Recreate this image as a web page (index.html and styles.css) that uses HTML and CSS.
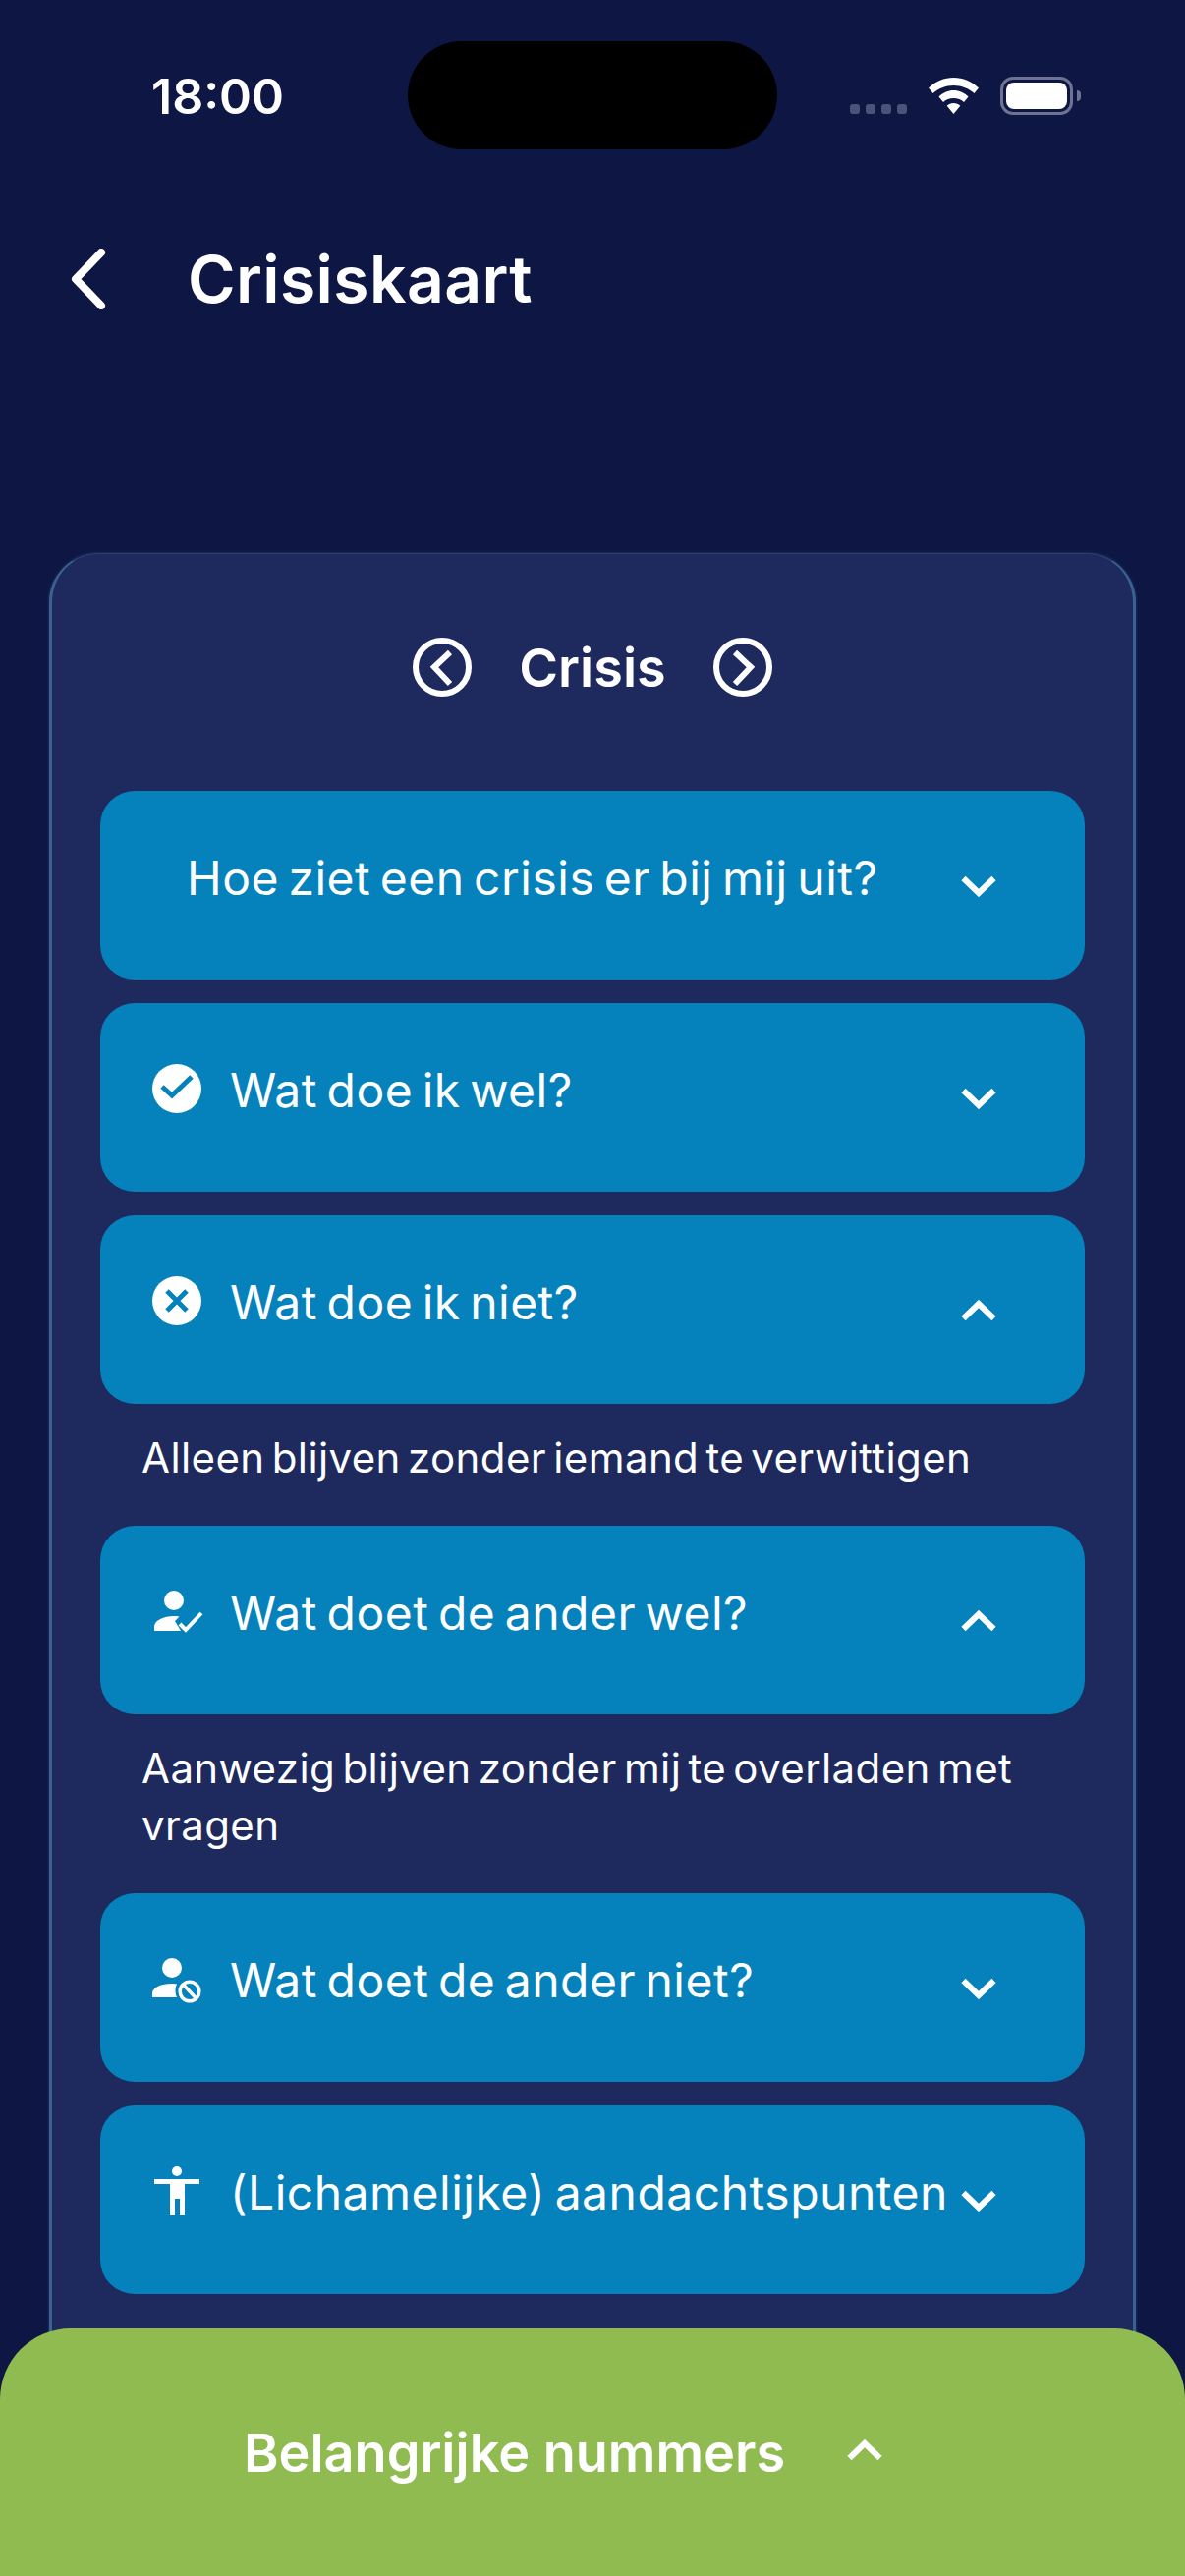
FILE: index.html
```html
<!DOCTYPE html>
<html>
<head>
  <title>Crisiskaart</title>
  <link rel="stylesheet" href="styles.css">
</head>
<body>
  <div class="phone">
    <div class="statusbar">
      <span class="time">18:00</span>
      <div class="island"></div>
      <div class="status-icons">
        <div class="signal"><i></i><i></i><i></i><i></i></div>
        <svg class="wifi" viewBox="0 0 51 37">
          <path d="M25.500 0C35 0 44 4 51 10.500L46.500 16C41 11 33.500 8 25.500 8S10 11 4.500 16L0 10.500C7 4 16 0 25.500 0Z" fill="#fff"/>
          <path d="M25.500 13C31 13 36.500 15.500 40.500 19.500L36 25C33.500 22.500 29.500 21 25.500 21S17.500 22.500 15 25L10.500 19.500C14.500 15.500 20 13 25.500 13Z" fill="#fff"/>
          <path d="M25.500 26C28 26 30.500 27 32.300 28.800L25.500 37L18.700 28.800C20.500 27 23 26 25.500 26Z" fill="#fff"/>
        </svg>
        <div class="battery"><div class="battery-fill"></div></div>
        <div class="battery-nub"></div>
      </div>
    </div>

    <div class="topbar">
      <svg class="back" viewBox="0 0 36 62"><path d="M31 4L5 31L31 58" fill="none" stroke="#fff" stroke-width="8" stroke-linecap="round" stroke-linejoin="round"/></svg>
      <h1>Crisiskaart</h1>
    </div>

    <div class="card">
      <div class="card-head">
        <svg class="nav-icon" viewBox="0 0 60 60"><circle cx="30" cy="30" r="27" fill="none" stroke="#fff" stroke-width="6"/><path d="M38 15L22 30L38 47" fill="none" stroke="#fff" stroke-width="6"/></svg>
        <h2>Crisis</h2>
        <svg class="nav-icon" viewBox="0 0 60 60"><circle cx="30" cy="30" r="27" fill="none" stroke="#fff" stroke-width="6"/><path d="M22 15L38 30L22 47" fill="none" stroke="#fff" stroke-width="6"/></svg>
      </div>

      <div class="list">
        <div class="row row-plain">
          <span class="label">Hoe ziet een crisis er bij mij uit?</span>
          <svg class="chev" viewBox="0 0 36 22"><path d="M2.500 3L18 18L33.500 3" fill="none" stroke="#fff" stroke-width="6"/></svg>
        </div>

        <div class="row">
          <svg class="icon" viewBox="0 0 50 50"><circle cx="25" cy="25" r="25" fill="#fff"/><path d="M10 23L20 32L40 13" fill="none" stroke="#0582bc" stroke-width="5"/></svg>
          <span class="label">Wat doe ik wel?</span>
          <svg class="chev" viewBox="0 0 36 22"><path d="M2.500 3L18 18L33.500 3" fill="none" stroke="#fff" stroke-width="6"/></svg>
        </div>

        <div class="row">
          <svg class="icon" viewBox="0 0 50 50"><circle cx="25" cy="25" r="25" fill="#fff"/><path d="M15 15L35 35M35 15L15 35" fill="none" stroke="#0582bc" stroke-width="5"/></svg>
          <span class="label">Wat doe ik niet?</span>
          <svg class="chev" viewBox="0 0 36 22"><path d="M2.500 19L18 4L33.500 19" fill="none" stroke="#fff" stroke-width="6"/></svg>
        </div>
        <p class="answer">Alleen blijven zonder iemand te verwittigen</p>

        <div class="row">
          <svg class="icon" viewBox="0 0 50 50"><circle cx="22" cy="14" r="10" fill="#fff"/><path d="M2 45V41C2 34 12 30 22 30C24 30 26 30 27.500 30.500L23 35L29 45Z" fill="#fff"/><path d="M28 38L34 44L50 27" fill="none" stroke="#fff" stroke-width="4"/></svg>
          <span class="label">Wat doet de ander wel?</span>
          <svg class="chev" viewBox="0 0 36 22"><path d="M2.500 19L18 4L33.500 19" fill="none" stroke="#fff" stroke-width="6"/></svg>
        </div>
        <p class="answer">Aanwezig blijven zonder mij te overladen met vragen</p>

        <div class="row">
          <svg class="icon" viewBox="0 0 50 50"><circle cx="20" cy="14" r="10" fill="#fff"/><path d="M0 44V40C0 34 9 30 20 30C22 30 24 30.200 25 30.500C23 34 23 40 25 44Z" fill="#fff"/><circle cx="38" cy="38" r="9.800" fill="none" stroke="#fff" stroke-width="3.500"/><path d="M31.500 31L44.500 45" stroke="#fff" stroke-width="3.500"/></svg>
          <span class="label">Wat doet de ander niet?</span>
          <svg class="chev" viewBox="0 0 36 22"><path d="M2.500 3L18 18L33.500 3" fill="none" stroke="#fff" stroke-width="6"/></svg>
        </div>

        <div class="row">
          <svg class="icon" viewBox="0 0 50 50"><circle cx="25" cy="5" r="5" fill="#fff"/><path d="M2 13H48V18H33V50H28V33H23V50H18V18H2Z" fill="#fff"/></svg>
          <span class="label">(Lichamelijke) aandachtspunten</span>
          <svg class="chev" viewBox="0 0 36 22"><path d="M2.500 3L18 18L33.500 3" fill="none" stroke="#fff" stroke-width="6"/></svg>
        </div>
      </div>
    </div>

    <div class="sheet">
      <span>Belangrijke nummers</span>
      <svg class="chev" viewBox="0 0 36 22"><path d="M2.500 19L18 4L33.500 19" fill="none" stroke="#fff" stroke-width="6"/></svg>
    </div>
  </div>
</body>
</html>
```

FILE: styles.css
```css
/* Page */
html, body {
  margin: 0;
  height: 100%;
  overflow: hidden;
}

body {
  background-color: #0e1744;
  color: #fff;
  font-family: Inter, "Noto Sans", sans-serif;
}

.phone {
  position: relative;
  width: 1206px;
  height: 2622px;
  overflow: hidden;
}

/* Status bar */
.statusbar {
  display: flex;
  align-items: flex-start;
  height: 152px;
  padding-top: 42px;
  box-sizing: border-box;
}

.time {
  width: 415px;
  padding-left: 154px;
  margin-top: 27px;
  box-sizing: border-box;
  font-size: 50px;
  line-height: 58px;
  font-weight: 600;
}

.island {
  flex: none;
  width: 376px;
  height: 110px;
  border-radius: 55px;
  background-color: #000;
}

.status-icons {
  display: flex;
  align-items: flex-start;
  margin-left: 74px;
  margin-top: 36px;
}

.signal {
  display: flex;
  gap: 6px;
  margin-top: 28px;
}

.signal i {
  width: 10px;
  height: 10px;
  border-radius: 3px;
  background-color: #4b5378;
}

.wifi {
  width: 51px;
  height: 37px;
  margin-left: 22px;
  margin-top: 1px;
}

.battery {
  width: 74px;
  height: 39px;
  margin-left: 22px;
  padding: 3px;
  box-sizing: border-box;
  border: 3px solid #6d7391;
  border-radius: 13px;
}

.battery-fill {
  height: 100%;
  background-color: #fff;
  border-radius: 8px;
}

.battery-nub {
  width: 4px;
  height: 11px;
  margin: 14px 0 0 4px;
  background-color: #6d7391;
  border-radius: 0 4px 4px 0;
}

/* Top bar */
.topbar {
  display: flex;
  align-items: center;
  height: 130px;
  margin-top: 67px;
  padding-left: 72px;
}

.back {
  width: 36px;
  height: 62px;
}

.topbar h1 {
  margin: 0 0 0 83px;
  font-size: 66px;
  font-weight: 600;
  letter-spacing: 0.4px;
}

/* Card */
.card {
  margin: 214px 50px 0;
  height: 2200px;
  padding: 0 49px;
  background-color: #1e2a5e;
  border: solid #3b628f;
  border-width: 1px 3px;
  border-top-color: #2a3f6e;
  border-radius: 50px;
  box-shadow: 0 0 3px rgba(80, 140, 190, 0.35);
}

.card-head {
  display: flex;
  align-items: center;
  justify-content: center;
  height: 241px;
  padding-bottom: 11px;
  box-sizing: border-box;
  gap: 48px;
}

.nav-icon {
  width: 60px;
  height: 60px;
}

.card-head h2 {
  margin: 0;
  font-size: 54px;
  font-weight: 600;
}

/* Accordion rows */
.list {
  display: flex;
  flex-direction: column;
  gap: 24px;
}

.row {
  display: flex;
  align-items: flex-start;
  height: 192px;
  padding: 56px 90px 0 53px;
  box-sizing: border-box;
  background-color: #0582bc;
  border-radius: 35px;
}

.icon {
  flex: none;
  width: 50px;
  height: 50px;
  margin: 6px 29px 0 0;
  overflow: visible;
}

.label {
  flex: 1;
  font-size: 48px;
  line-height: 66px;
  letter-spacing: 0.5px;
  word-spacing: -4.5px;
  white-space: nowrap;
}

.row-plain .label {
  padding-left: 35px;
}

.chev {
  flex: none;
  width: 36px;
  height: 22px;
  margin-top: 30px;
}

.answer {
  margin: 0;
  padding: 2px 43px 16.5px 42px;
  font-size: 42px;
  line-height: 57.5px;
  letter-spacing: 0.4px;
  word-spacing: -5px;
}

/* Bottom sheet */
.sheet {
  position: absolute;
  left: 0;
  right: 0;
  top: 2370px;
  bottom: 0;
  display: flex;
  align-items: center;
  justify-content: center;
  gap: 63px;
  padding-right: 60px;
  background-color: #8fbb50;
  border-radius: 72px 72px 0 0;
  font-size: 54px;
  font-weight: 600;
}

.sheet .chev {
  margin-top: -4px;
}
```
